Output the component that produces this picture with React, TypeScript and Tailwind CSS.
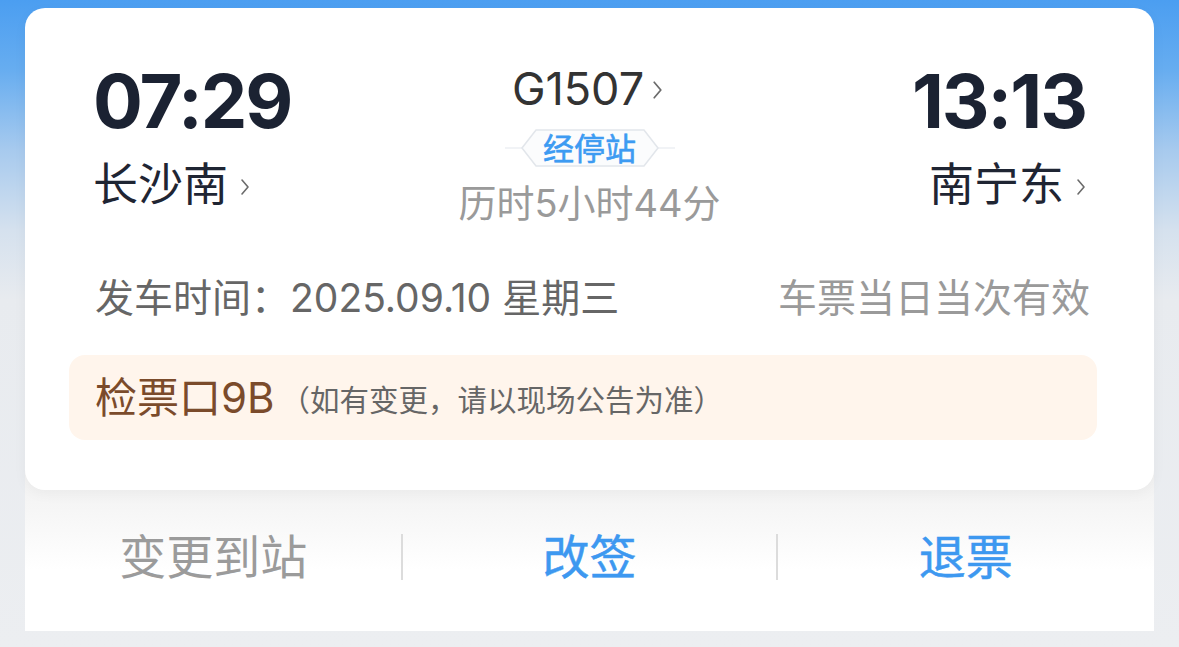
const Chevron = ({ className }: { className?: string }) => (
  <svg viewBox="0 0 10 20" className={className} fill="none">
    <polyline points="2,3 8,10 2,17" stroke="#6b6b6b" strokeWidth="1.6" strokeLinecap="round" strokeLinejoin="round" />
  </svg>
);

const StopsBadge = () => (
  <div className="relative w-[170px] h-[38px] flex items-center justify-center">
    <svg viewBox="0 0 170 38" className="absolute inset-0 w-full h-full">
      <line x1="0" y1="19" x2="17" y2="19" stroke="#eceff3" strokeWidth="1.5" />
      <line x1="153" y1="19" x2="170" y2="19" stroke="#eceff3" strokeWidth="1.5" />
      <polygon points="17,19 31,1 139,1 153,19 139,37 31,37" fill="#fbfcfd" stroke="#e2e6eb" strokeWidth="1.5" />
    </svg>
    <span className="relative text-[31px] leading-none text-[#3d9bf2] [-webkit-text-stroke:0.6px_#3d9bf2]">经停站</span>
  </div>
);

export default function App() {
  return (
    <div className="min-h-[647px] w-full pt-[8px] bg-[linear-gradient(180deg,#4b9ef1_0px,#67adf0_70px,#a7caee_150px,#d5e1ee_230px,#e8ebef_300px,#eceef1_100%)] font-[family-name:Inter,'Noto_Sans_CJK_SC',sans-serif]">
      <div className="mx-[25px]">
        <div className="relative z-10 rounded-[20px] bg-white shadow-[0_4px_14px_rgba(0,0,0,0.04)] pt-[54px] pb-[50px]">
          <div className="grid grid-cols-3 px-[68px]">
            <div className="flex flex-col items-start">
              <div className="h-[78px] text-[74px] leading-[78px] font-bold text-[#1b2232] tracking-[-2px]">07:29</div>
              <div className="mt-[21px] flex items-center gap-[12px]">
                <span className="text-[45px] leading-[48px] text-[#1f2533]">长沙南</span>
                <Chevron className="w-[10px] h-[20px] mt-[4px]" />
              </div>
            </div>

            <div className="flex flex-col items-center pt-[3px]">
              <div className="flex items-center gap-[8px] pr-[4px]">
                <span className="text-[45px] leading-[48px] text-[#333333]">G1507</span>
                <Chevron className="w-[11px] h-[22px] mt-[2px]" />
              </div>
              <div className="mt-[16px]">
                <StopsBadge />
              </div>
              <div className="mt-[14px] text-[38px] leading-[44px] text-[#9a9a9a]">历时5小时44分</div>
            </div>

            <div className="flex flex-col items-end">
              <div className="h-[78px] text-[74px] leading-[78px] font-bold text-[#1b2232] tracking-[-2px]">13:13</div>
              <div className="mt-[21px] flex items-center gap-[12px]">
                <span className="text-[45px] leading-[48px] text-[#1f2533]">南宁东</span>
                <Chevron className="w-[10px] h-[20px] mt-[4px]" />
              </div>
            </div>
          </div>

          <div className="mt-[51px] flex items-center justify-between pl-[70px] pr-[64px] text-[39px] leading-[44px]">
            <span className="text-[#666666]">发车时间：2025.09.10 星期三</span>
            <span className="text-[#9a9a9a]">车票当日当次有效</span>
          </div>

          <div className="mt-[35px] ml-[44px] mr-[57px] h-[85px] rounded-[16px] bg-[#fff5ec] flex items-center pl-[26px]">
            <span className="text-[42px] leading-none text-[#7b4b2b]">检票口9B</span>
            <span className="ml-[6px] mt-[6px] text-[29.5px] leading-none text-[#666666]">（如有变更，请以现场公告为准）</span>
          </div>
        </div>

        <div className="-mt-[20px] pt-[12px] h-[161px] bg-[linear-gradient(180deg,#f1f1f1_0px,#f6f6f6_40px,#ffffff_100px)] grid grid-cols-3">
          <div className="flex items-center justify-center text-[47px] leading-none text-[#9b9b9b]">变更到站</div>
          <div className="relative flex items-center justify-center text-[47px] leading-none text-[#3d98f0] [-webkit-text-stroke:0.5px_#3d98f0]">
            <span className="absolute left-0 top-1/2 -translate-y-1/2 w-[2px] h-[46px] bg-[#dcdcdc]" />
            改签
            <span className="absolute right-0 top-1/2 -translate-y-1/2 w-[2px] h-[46px] bg-[#dcdcdc]" />
          </div>
          <div className="flex items-center justify-center text-[47px] leading-none text-[#3d98f0] [-webkit-text-stroke:0.5px_#3d98f0]">退票</div>
        </div>
      </div>
    </div>
  );
}
